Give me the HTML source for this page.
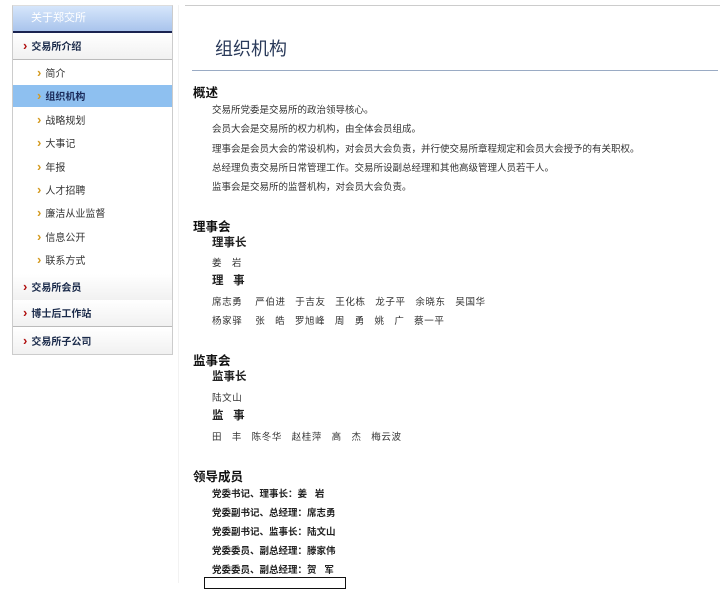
<!DOCTYPE html>
<html><head><meta charset="utf-8"><style>
body{margin:0;width:720px;height:583px;background:#fff;position:relative;overflow:hidden;font-family:"Liberation Sans","Noto Sans CJK SC",sans-serif;color:#222}
.a{position:absolute;white-space:nowrap}
#side{position:absolute;left:12px;top:5px;width:159px;height:348px;border:1px solid #ccc;border-top:1px solid #ddd}
.hd{position:absolute;left:0;top:0;width:159px;height:25px;background:linear-gradient(#d6e6fb,#a9c4ec);border-bottom:2px solid #1a2350;color:#fff;font-size:11px;line-height:25px}
.hd span{margin-left:18px}
.top{position:absolute;left:0;width:159px;height:26px;font-size:10px;font-weight:bold;color:#1a2a4a;line-height:26px;border-bottom:1px solid #bbb;background:linear-gradient(#fff,#f1f1f1)}
.top i,.sub i{font-style:normal;font-weight:bold;font-size:13px;margin:0 4px 0 10px}
.top i{color:#b01010}
.sub{position:absolute;left:0;width:159px;height:22px;line-height:22px;font-size:10px;color:#333}
.sub i{color:#d49a20;margin-left:24px}
.sel{background:#8ec0f0;font-weight:bold;color:#1a2a5a}
.p{font-size:9.5px;color:#333;left:212px}
.n{letter-spacing:0.6px}
.h{font-size:12.5px;font-weight:bold;left:193px;color:#111}
.h2{font-size:11.5px;font-weight:bold;left:212px;color:#222}
.b{font-size:9.5px;font-weight:bold;left:212px;color:#222}
</style></head><body>
<div class="a" style="left:185px;top:5px;width:535px;border-top:1px solid #ccc"></div>
<div class="a" style="left:178px;top:5px;height:578px;border-left:1px solid #f2f2f2"></div>
<div id="side">
<div class="hd"><span>关于郑交所</span></div>
<div class="top" style="top:27px"><i>›</i>交易所介绍</div>
<div class="sub" style="top:56px"><i>›</i>简介</div>
<div class="sub sel" style="top:79px"><i>›</i>组织机构</div>
<div class="sub" style="top:103px"><i>›</i>战略规划</div>
<div class="sub" style="top:126px"><i>›</i>大事记</div>
<div class="sub" style="top:150px"><i>›</i>年报</div>
<div class="sub" style="top:173px"><i>›</i>人才招聘</div>
<div class="sub" style="top:196px"><i>›</i>廉洁从业监督</div>
<div class="sub" style="top:220px"><i>›</i>信息公开</div>
<div class="sub" style="top:243px"><i>›</i>联系方式</div>
<div class="top" style="top:267px;border-top:1px solid #fff"><i>›</i>交易所会员</div>
<div class="top" style="top:294px"><i>›</i>博士后工作站</div>
<div class="top" style="top:322px;border-bottom:none"><i>›</i>交易所子公司</div>
</div>
<div class="a" style="left:215px;top:35px;font-size:18px;color:#2a3a5a">组织机构</div>
<div class="a" style="left:192px;top:70px;width:526px;border-top:1px solid #9aabc4"></div>
<div class="a h" style="top:82px">概述</div>
<div class="a p" style="top:102px">交易所党委是交易所的政治领导核心。</div>
<div class="a p" style="top:121px">会员大会是交易所的权力机构，由全体会员组成。</div>
<div class="a p" style="top:141px">理事会是会员大会的常设机构，对会员大会负责，并行使交易所章程规定和会员大会授予的有关职权。</div>
<div class="a p" style="top:160px">总经理负责交易所日常管理工作。交易所设副总经理和其他高级管理人员若干人。</div>
<div class="a p" style="top:179px">监事会是交易所的监督机构，对会员大会负责。</div>
<div class="a h" style="top:216px">理事会</div>
<div class="a h2" style="top:234px">理事长</div>
<div class="a p n" style="top:255px">姜&nbsp;&nbsp;&nbsp;岩</div>
<div class="a h2" style="top:272px">理&nbsp;&nbsp;&nbsp;事</div>
<div class="a p n" style="top:294px">席志勇&nbsp;&nbsp;&nbsp;&nbsp;严伯进&nbsp;&nbsp;&nbsp;于吉友&nbsp;&nbsp;&nbsp;王化栋&nbsp;&nbsp;&nbsp;龙子平&nbsp;&nbsp;&nbsp;余晓东&nbsp;&nbsp;&nbsp;吴国华</div>
<div class="a p n" style="top:313px">杨家驿&nbsp;&nbsp;&nbsp;&nbsp;张&nbsp;&nbsp;&nbsp;皓&nbsp;&nbsp;&nbsp;罗旭峰&nbsp;&nbsp;&nbsp;周&nbsp;&nbsp;&nbsp;勇&nbsp;&nbsp;&nbsp;姚&nbsp;&nbsp;&nbsp;广&nbsp;&nbsp;&nbsp;蔡一平</div>
<div class="a h" style="top:350px">监事会</div>
<div class="a h2" style="top:368px">监事长</div>
<div class="a p n" style="top:390px">陆文山</div>
<div class="a h2" style="top:407px">监&nbsp;&nbsp;&nbsp;事</div>
<div class="a p n" style="top:429px">田&nbsp;&nbsp;&nbsp;丰&nbsp;&nbsp;&nbsp;陈冬华&nbsp;&nbsp;&nbsp;赵桂萍&nbsp;&nbsp;&nbsp;高&nbsp;&nbsp;&nbsp;杰&nbsp;&nbsp;&nbsp;梅云波</div>
<div class="a h" style="top:466px">领导成员</div>
<div class="a b" style="top:486px">党委书记、理事长：姜&nbsp;&nbsp;&nbsp;岩</div>
<div class="a b" style="top:505px">党委副书记、总经理：席志勇</div>
<div class="a b" style="top:524px">党委副书记、监事长：陆文山</div>
<div class="a b" style="top:543px">党委委员、副总经理：滕家伟</div>
<div class="a b" style="top:562px">党委委员、副总经理：贺&nbsp;&nbsp;&nbsp;军</div>
<div class="a" style="left:204px;top:577px;width:140px;height:10px;border:1px solid #111"></div>
</body></html>
